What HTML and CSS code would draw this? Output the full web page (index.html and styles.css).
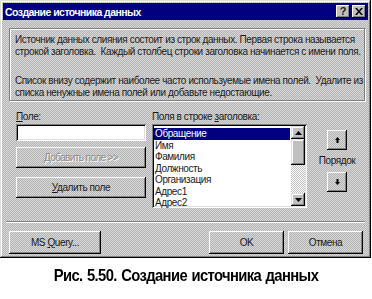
FILE: index.html
```html
<!DOCTYPE html>
<html lang="ru">
<head>
<meta charset="utf-8">
<link rel="stylesheet" href="styles.css">
</head>
<body>
<div class="dialog">
  <div class="titlebar">
    <span class="title">Создание источника данных</span>
    <div class="tbtns">
      <span class="tbtn help">?</span>
      <span class="tbtn close"><svg width="8" height="7" viewBox="0 0 8 7"><path d="M0 0h2l2 2.5 2-2.5h2l-3 3.5 3 3.5h-2l-2-2.5-2 2.5h-2l3-3.5z" fill="#000"/></svg></span>
    </div>
  </div>
  <div class="body">
    <div class="group">
      <p>Источник данных слияния состоит из строк данных. Первая строка называется<br>строкой заголовка.&nbsp; Каждый столбец строки заголовка начинается с имени поля.</p>
      <p>Список внизу содержит наиболее часто используемые имена полей.&nbsp; Удалите из<br>списка ненужные имена полей или добавьте недостающие.</p>
    </div>
    <div class="fields">
      <div class="col-left">
        <span class="label"><u>П</u>оле:</span>
        <div class="input"></div>
        <div class="btn disabled wide"><span><u>Д</u>обавить поле &gt;&gt;</span></div>
        <div class="btn wide"><span><u>У</u>далить поле</span></div>
      </div>
      <div class="col-mid">
        <span class="label">Поля в строке <u>з</u>аголовка:</span>
        <div class="listbox">
          <ul class="items">
            <li class="sel">Обращение</li>
            <li>Имя</li>
            <li>Фамилия</li>
            <li>Должность</li>
            <li>Организация</li>
            <li>Адрес1</li>
            <li>Адрес2</li>
          </ul>
          <div class="scrollbar">
            <div class="sbtn"><svg width="7" height="4" viewBox="0 0 7 4"><path d="M3.5 0L7 4H0z" fill="#000"/></svg></div>
            <div class="thumb"></div>
            <div class="track"></div>
            <div class="sbtn"><svg width="7" height="4" viewBox="0 0 7 4"><path d="M0 0h7L3.5 4z" fill="#000"/></svg></div>
          </div>
        </div>
      </div>
      <div class="col-right">
        <div class="btn arrow"><svg width="5" height="6" viewBox="0 0 5 6"><path d="M2.5 0L5 3H3.5v3h-2V3H0z" fill="#000"/></svg></div>
        <span class="order">Порядок</span>
        <div class="btn arrow"><svg width="5" height="6" viewBox="0 0 5 6"><path d="M1.5 0h2v3H5L2.5 6 0 3h1.5z" fill="#000"/></svg></div>
      </div>
    </div>
    <div class="sep"></div>
    <div class="footer">
      <div class="btn fbtn query"><span>MS <u>Q</u>uery...</span></div>
      <div class="btn fbtn ok"><span>OK</span></div>
      <div class="btn fbtn"><span>Отмена</span></div>
    </div>
  </div>
</div>
<p class="caption">Рис. 5.50. Создание источника данных</p>
</body>
</html>
```

FILE: styles.css
```css
* { box-sizing: border-box; }
html, body { margin: 0; padding: 0; background: #fff; }
body {
  font-family: "Liberation Sans", Arial, sans-serif;
  font-size: 10px;
  letter-spacing: -0.4px;
  color: #1a1a1a;
  width: 372px;
  height: 299px;
  overflow: hidden;
}
.dialog {
  width: 371px;
  height: 258px;
  background: repeating-conic-gradient(#b4b4b4 0 25%, #d8d8d8 0 50%) 0 0 / 2px 2px;
  box-shadow: inset -1px -1px #000, inset 1px 1px #dfdfdf, inset -2px -2px #808080, inset 2px 2px #fff;
  padding: 3px;
  display: flex;
  flex-direction: column;
}
.titlebar {
  height: 17px;
  background: #000080;
  display: flex;
  align-items: center;
  justify-content: space-between;
  padding: 0 2px 0 2px;
}
.title {
  color: #fff;
  font-weight: bold;
  font-size: 10.5px;
  font-family: "Liberation Sans", Arial, sans-serif;
  letter-spacing: -0.55px;
}
.tbtns { display: flex; gap: 2px; }
.tbtn {
  width: 14px;
  height: 13px;
  background: #c0c0c0;
  box-shadow: inset -1px -1px #000, inset 1px 1px #fff, inset -2px -2px #808080;
  display: flex;
  align-items: center;
  justify-content: center;
  font-weight: bold;
  font-size: 11px;
  letter-spacing: 0;
  line-height: 1;
}
.body {
  flex: 1;
  padding: 8px 4px 0 6px;
  display: flex;
  flex-direction: column;
}
.group {
  width: 356px;
  height: 73px;
  border: 1px solid #808080;
  box-shadow: inset 1px 1px #fff, 1px 1px #fff;
  padding: 5px 0 0 5px;
}
.group p { margin: 0 0 6px; line-height: 12px; white-space: nowrap; letter-spacing: -0.39px; }
.group p + p { margin-top: 17px; }
.fields {
  display: flex;
  margin-top: 10px;
  padding-left: 7px;
  height: 108px;
}
.label { display: block; line-height: 12px; height: 13px; }
.col-left { width: 130px; display: flex; flex-direction: column; }
.input {
  height: 17px;
  background: #fff;
  box-shadow: inset 1px 1px #808080, inset -1px -1px #fff, inset 2px 2px #000, inset -2px -2px #dfdfdf;
}
.btn {
  background: repeating-conic-gradient(#b4b4b4 0 25%, #d8d8d8 0 50%) 0 0 / 2px 2px;
  box-shadow: inset -1px -1px #000, inset 1px 1px #fff, inset -2px -2px #808080;
  display: flex;
  align-items: center;
  justify-content: center;
  line-height: 1;
  white-space: pre;
}
.btn.wide { height: 21px; }
.col-left .disabled { margin-top: 6px; color: #8a8a8a; text-shadow: 1px 1px #fff; letter-spacing: -0.6px; }
.col-left .disabled + .btn { margin-top: 9px; }
.col-mid { width: 155px; margin-left: 6px; }
.listbox {
  height: 84px;
  background: #fff;
  box-shadow: inset 1px 1px #808080, inset -1px -1px #fff, inset 2px 2px #000, inset -2px -2px #dfdfdf;
  padding: 2px;
  display: flex;
}
.items {
  list-style: none;
  margin: 0;
  padding: 2px 0 0 0;
  flex: 1;
}
.items li { height: 11.5px; line-height: 11.5px; padding-left: 1px; }
.items li.sel { background: #000080; color: #fff; margin-right: 1px; }
.scrollbar {
  width: 14px;
  display: flex;
  flex-direction: column;
}
.sbtn {
  height: 13px;
  background: #c0c0c0;
  box-shadow: inset -1px -1px #000, inset 1px 1px #dfdfdf, inset -2px -2px #808080, inset 2px 2px #fff;
  display: flex;
  align-items: center;
  justify-content: center;
}
.thumb {
  height: 26px;
  background: #c0c0c0;
  box-shadow: inset -1px -1px #000, inset 1px 1px #dfdfdf, inset -2px -2px #808080, inset 2px 2px #fff;
}
.track {
  flex: 1;
  background: repeating-conic-gradient(#fff 0 25%, #c0c0c0 0 50%) 0 0 / 2px 2px;
}
.col-right {
  width: 40px;
  display: flex;
  flex-direction: column;
  align-items: center;
  padding-top: 19px;
  margin-left: 10px;
}
.arrow { width: 20px; height: 20px; }
.order { margin: 5px 0 5px; line-height: 12px; }
.sep {
  height: 2px;
  border-top: 1px solid #808080;
  border-bottom: 1px solid #fff;
  margin: 2px -1px 0 -3px;
}
.footer {
  display: flex;
  margin-top: 8px;
  gap: 4px;
}
.fbtn { height: 23px; width: 75px; }
.query { width: 92px; }
.ok { margin-left: auto; }
.footer .fbtn:last-child { margin-right: 1px; }
.caption {
  margin: 8px 0 0;
  text-align: center;
  font-family: "Liberation Sans", Arial, sans-serif;
  font-weight: bold;
  font-size: 17px;
  letter-spacing: -0.7px;
  word-spacing: 1px;
  color: #000;
  transform: scaleX(0.87);
}
```
